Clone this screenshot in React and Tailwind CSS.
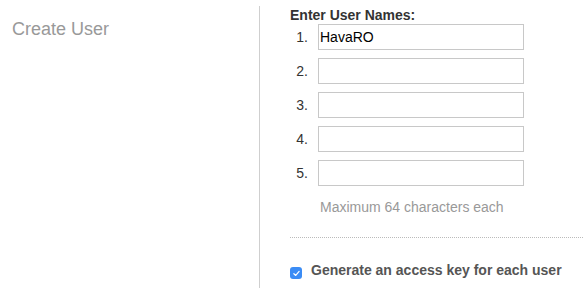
import React from "react";

const names = ["HavaRO", "", "", "", ""];

const App = () => {
  return (
    <div className="w-[583px] h-[288px] bg-white flex font-['Liberation_Sans',Arial,sans-serif] overflow-hidden">
      <div className="w-[259px] shrink-0 pl-3 pt-[19px]">
        <div className="text-[18px] leading-5 text-[#999]">Create User</div>
      </div>
      <div className="flex-1 mt-[6px] border-l border-[#cfcfcf] pl-[30px] pt-px">
        <div className="text-[14px] leading-4 font-bold text-[#333]">Enter User Names:</div>
        <div className="mt-px flex flex-col gap-2">
          {names.map((name, index) => (
            <div key={index} className="flex items-center">
              <div className="w-[18px] text-right text-[14px] text-[#333]">{index + 1}.</div>
              <input
                type="text"
                defaultValue={name}
                className="ml-[10px] w-[206px] h-[26px] border border-[#c8c8c8] px-px text-[14px] text-black outline-none"
              />
            </div>
          ))}
        </div>
        <div className="mt-[13px] ml-[30px] text-[14px] leading-4 text-[#999]">Maximum 64 characters each</div>
        <div className="mt-[22px] border-t border-dotted border-[#bbb]"></div>
        <div className="mt-6 flex items-start">
          <div className="mt-[5px] w-3 h-3 rounded-[3px] bg-[#3b8cf5] flex items-center justify-center">
            <svg viewBox="0 0 12 12" className="w-[9px] h-[9px]">
              <path d="M2.5 6.3 L5 8.6 L9.5 3.2" fill="none" stroke="white" strokeWidth="1.6" strokeLinecap="round" strokeLinejoin="round" />
            </svg>
          </div>
          <div className="ml-[9px] text-[14px] leading-4 font-bold text-[#555]">Generate an access key for each user</div>
        </div>
      </div>
    </div>
  );
};

export default App;
